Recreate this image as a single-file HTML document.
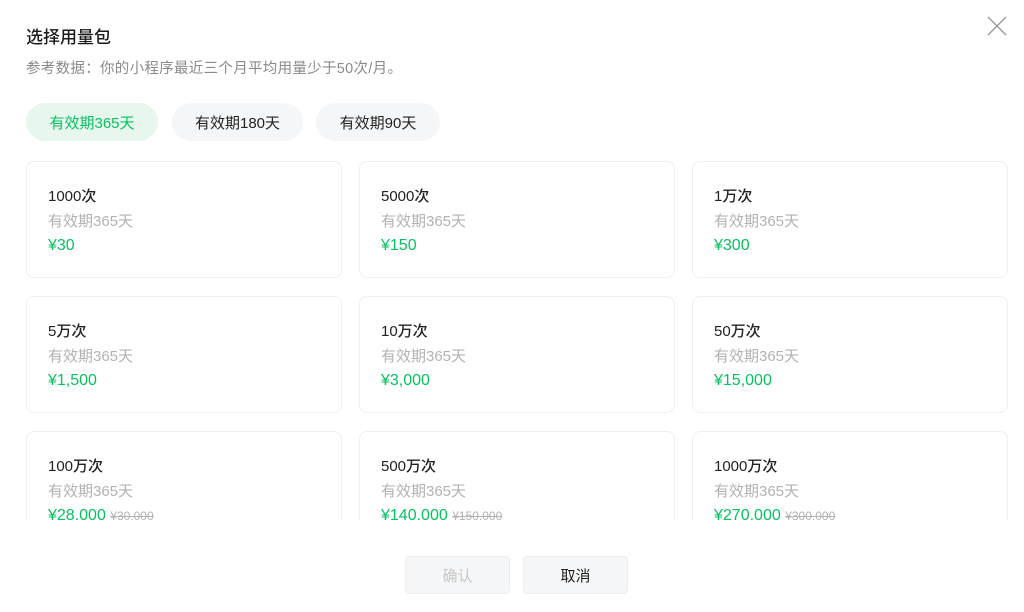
<!DOCTYPE html>
<html><head><meta charset="utf-8"><style>
*{margin:0;padding:0;box-sizing:border-box}
body{width:1024px;height:612px;background:#fff;font-family:"Liberation Sans","Noto Sans CJK SC",sans-serif;position:relative;overflow:hidden}
.t{position:absolute;left:26px;top:23px;font-size:17px;color:#1a1a1a;font-weight:500}
.s{position:absolute;left:26px;top:57px;font-size:14.5px;color:#8a8a8a;letter-spacing:0.3px}
.tab{position:absolute;top:103px;height:38px;border-radius:19px;background:#f5f6f7;font-size:15px;color:#222;display:flex;align-items:center;justify-content:center}
.tab.on{background:#e8f7ed;color:#07c160}
.area{position:absolute;left:0;top:160px;width:1024px;height:360px;overflow:hidden}
.c{position:absolute;width:316px;height:117px;border:1px solid #efefef;border-radius:8px}
.c .a{position:absolute;left:21px;top:23px;font-size:15px;color:#222;font-weight:500}
.c .b{position:absolute;left:21px;top:48px;font-size:15px;color:#b2b2b2}
.c .p{position:absolute;left:21px;top:75px;font-size:16px;color:#07c160;font-weight:500}
.c .p del{font-size:12px;color:#b2b2b2;font-weight:400}
.btn{position:absolute;top:556px;height:38px;width:105px;border-radius:4px;background:#f5f6f7;font-size:15px;display:flex;align-items:center;justify-content:center;border:1px solid #eee}
</style></head><body>
<div class="t">选择用量包</div>
<div class="s">参考数据：你的小程序最近三个月平均用量少于50次/月。</div>
<svg style="position:absolute;left:987px;top:16px" width="20" height="20" viewBox="0 0 20 20"><path d="M1 1L19 19M19 1L1 19" stroke="#999" stroke-width="1.4"/></svg>
<div class="tab on" style="left:26px;width:132px">有效期365天</div>
<div class="tab" style="left:172px;width:131px">有效期180天</div>
<div class="tab" style="left:316px;width:124px">有效期90天</div>
<div class="area">
<div class="c" style="left:26px;top:1px"><div class="a">1000次</div><div class="b">有效期365天</div><div class="p">¥30</div></div>
<div class="c" style="left:359px;top:1px"><div class="a">5000次</div><div class="b">有效期365天</div><div class="p">¥150</div></div>
<div class="c" style="left:692px;top:1px"><div class="a">1万次</div><div class="b">有效期365天</div><div class="p">¥300</div></div>
<div class="c" style="left:26px;top:136px"><div class="a">5万次</div><div class="b">有效期365天</div><div class="p">¥1,500</div></div>
<div class="c" style="left:359px;top:136px"><div class="a">10万次</div><div class="b">有效期365天</div><div class="p">¥3,000</div></div>
<div class="c" style="left:692px;top:136px"><div class="a">50万次</div><div class="b">有效期365天</div><div class="p">¥15,000</div></div>
<div class="c" style="left:26px;top:271px"><div class="a">100万次</div><div class="b">有效期365天</div><div class="p">¥28,000 <del>¥30,000</del></div></div>
<div class="c" style="left:359px;top:271px"><div class="a">500万次</div><div class="b">有效期365天</div><div class="p">¥140,000 <del>¥150,000</del></div></div>
<div class="c" style="left:692px;top:271px"><div class="a">1000万次</div><div class="b">有效期365天</div><div class="p">¥270,000 <del>¥300,000</del></div></div>
</div>
<div class="btn" style="left:405px;color:#c8c8c8">确认</div>
<div class="btn" style="left:523px;color:#222">取消</div>
</body></html>
